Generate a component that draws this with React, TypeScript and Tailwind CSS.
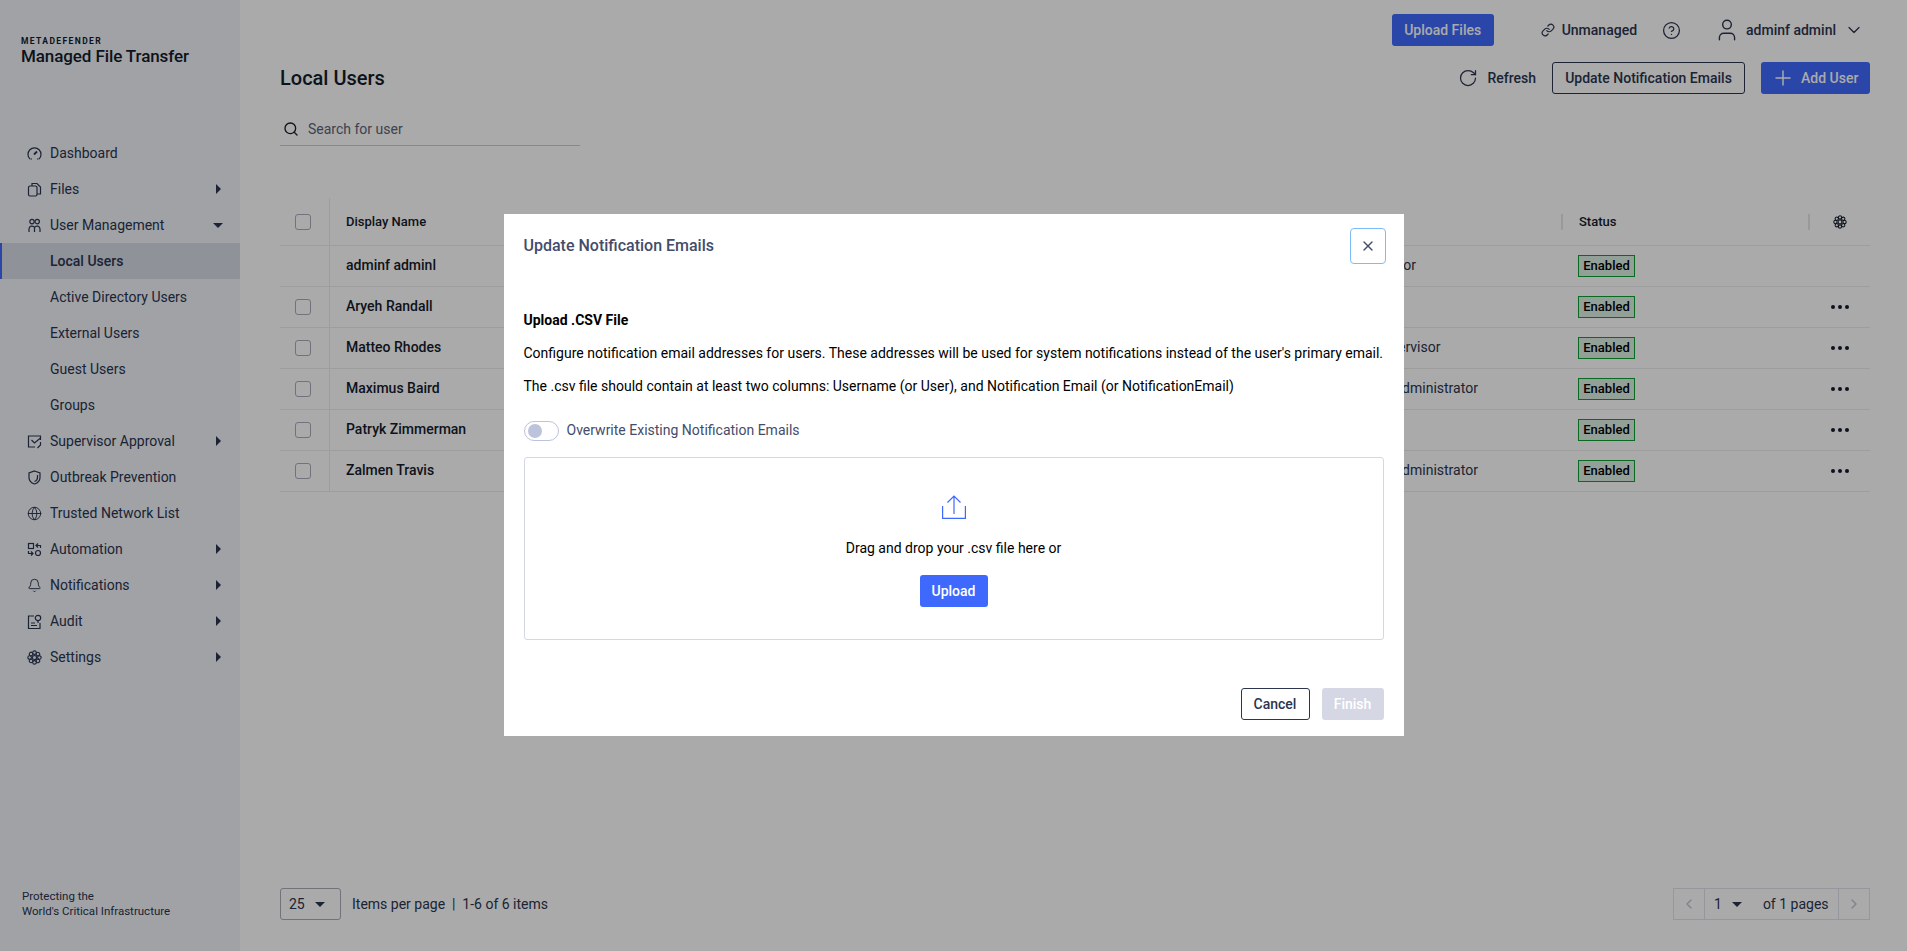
import React from 'react'
import { Bell, ChevronDown, ChevronLeft, ChevronRight, CircleHelp, Globe, Link, Plus, RotateCw, Search, User, X } from 'lucide-react'

const font = { fontFamily: 'Roboto, sans-serif' }

const Caret = ({ down }: { down?: boolean }) =>
  down ? (
    <span className="h-0 w-0 border-x-[5px] border-t-[5px] border-x-transparent border-t-[#2b3550]" />
  ) : (
    <span className="h-0 w-0 border-y-[5px] border-l-[5px] border-y-transparent border-l-[#2b3550]" />
  )

const Ico = ({ children }: { children: React.ReactNode }) => (
  <svg width="15" height="15" viewBox="0 0 15 15" fill="none" stroke="currentColor" strokeWidth="1.2" className="mr-[8px] shrink-0">
    {children}
  </svg>
)

const Cog = ({ size = 15 }: { size?: number }) => (
  <svg width={size} height={size} viewBox="0 0 16 16" fill="none" stroke="currentColor" strokeWidth="1.2">
    {[0, 45, 90, 135, 180, 225, 270, 315].map((a) => (
      <circle key={a} cx="8" cy="2.8" r="1.9" transform={`rotate(${a} 8 8)`} />
    ))}
    <circle cx="8" cy="8" r="2.2" />
  </svg>
)

const DashboardIcon = () => (
  <Ico>
    <path d="M3 13A6.5 6.5 0 1 1 12 13" />
    <path d="M3.5 13h1.5M10 13h1.5" />
    <path d="M7 8.5l3-3" strokeWidth="1.8" />
  </Ico>
)

const FilesIcon = () => (
  <Ico>
    <path d="M5 4V1.5h5l3.5 3.5v7H10" />
    <rect x="1.5" y="4" width="8.5" height="10" rx="1.5" />
  </Ico>
)

const UsersIcon = () => (
  <Ico>
    <circle cx="5" cy="3.6" r="2.2" />
    <circle cx="10.2" cy="3.6" r="2.2" />
    <path d="M2 14v-3a3 3 0 0 1 5.5-1.6V14M7.5 9.4A3 3 0 0 1 13 11v3" />
  </Ico>
)

const ApprovalIcon = () => (
  <Ico>
    <path d="M13.5 6V2H1.5v11H8" />
    <path d="M4.5 6l3 3 6-5" />
    <path d="M13.5 8v3l-3 3" />
  </Ico>
)

const ShieldIcon = () => (
  <Ico>
    <path d="M7.5 1L13 3v4.5C13 11 10.5 13 7.5 14 4.5 13 2 11 2 7.5V3z" />
    <path d="M10.5 5v2.5c0 2-1 3.2-3 4" />
  </Ico>
)

const AutomationIcon = () => (
  <Ico>
    <rect x="1.5" y="1.5" width="5" height="5" />
    <path d="M13.5 6V3.5h-4M11 1.5l-2 2 2 2" />
    <path d="M1.5 9v2.5h4M4 9.5l2 2-2 2" />
    <circle cx="11" cy="11" r="2.5" />
  </Ico>
)

const AuditIcon = () => (
  <Ico>
    <path d="M7 2H1.5v12.5H13V9" />
    <path d="M4 9h4M4 11.5h6" />
    <circle cx="11" cy="4" r="2.7" />
    <path d="M11 6.7V9" />
  </Ico>
)

const nav = [
  { label: 'Dashboard', icon: <DashboardIcon /> },
  { label: 'Files', icon: <FilesIcon />, caret: 'right' },
  { label: 'User Management', icon: <UsersIcon />, caret: 'down' },
  { label: 'Local Users', sub: true, active: true },
  { label: 'Active Directory Users', sub: true },
  { label: 'External Users', sub: true },
  { label: 'Guest Users', sub: true },
  { label: 'Groups', sub: true },
  { label: 'Supervisor Approval', icon: <ApprovalIcon />, caret: 'right' },
  { label: 'Outbreak Prevention', icon: <ShieldIcon /> },
  { label: 'Trusted Network List', icon: <Globe size={15} strokeWidth={1.5} className="mr-[8px] shrink-0" /> },
  { label: 'Automation', icon: <AutomationIcon />, caret: 'right' },
  { label: 'Notifications', icon: <Bell size={15} strokeWidth={1.5} className="mr-[8px] shrink-0" />, caret: 'right' },
  { label: 'Audit', icon: <AuditIcon />, caret: 'right' },
  {
    label: 'Settings',
    icon: (
      <span className="mr-[8px] flex shrink-0">
        <Cog />
      </span>
    ),
    caret: 'right',
  },
]

const users = [
  { name: 'adminf adminl', role: 'Administrator', self: true },
  { name: 'Aryeh Randall', role: 'Operator' },
  { name: 'Matteo Rhodes', role: 'Senior Supervisor' },
  { name: 'Maximus Baird', role: 'Workflow Administrator' },
  { name: 'Patryk Zimmerman', role: 'Operator' },
  { name: 'Zalmen Travis', role: 'Workflow Administrator' },
]

const Sidebar = () => (
  <aside className="flex h-[951px] w-[240px] shrink-0 flex-col bg-[#f0f3f9]">
    <div className="h-[135px] pl-[21px] pt-[36px]">
      <div className="text-[8.5px] font-bold leading-[10px] tracking-[1.4px] text-[#141b2c]">METADEFENDER</div>
      <div className="text-[17px] font-medium leading-[20px] tracking-[-0.1px] text-[#141b2c]">Managed File Transfer</div>
    </div>
    <nav>
      {nav.map((item) => (
        <div
          key={item.label}
          className={
            item.active
              ? 'flex h-[36px] items-center border-l-[2px] border-[#3f69fc] bg-[#d7dce6] pl-[48px] text-[14px] font-medium text-[#2b3550]'
              : 'flex h-[36px] items-center pl-[27px] text-[14px] text-[#2b3550]'
          }
        >
          {item.icon ? item.icon : item.active ? null : <span className="w-[23px]" />}
          <span className="flex-1">{item.label}</span>
          {item.caret && (
            <span className="mr-[17px] flex w-[10px] justify-center">
              <Caret down={item.caret === 'down'} />
            </span>
          )}
        </div>
      ))}
    </nav>
    <div className="mt-auto pb-[32px] pl-[22px] text-[11.5px] leading-[15px] text-[#2b3550]">
      <div>Protecting the</div>
      <div>World's Critical Infrastructure</div>
    </div>
  </aside>
)

const Dots = () => (
  <span className="flex gap-[3px]">
    <span className="h-[4px] w-[4px] rounded-full bg-[#141b2c]" />
    <span className="h-[4px] w-[4px] rounded-full bg-[#141b2c]" />
    <span className="h-[4px] w-[4px] rounded-full bg-[#141b2c]" />
  </span>
)

const UsersTable = () => (
  <div className="text-[14px] font-medium text-[#141b2c]">
    <div className="flex h-[48px] items-center border-b border-[#ececec] text-[13px]">
      <div className="flex h-full w-[50px] items-center justify-center border-r border-[#ececec] pr-[3px]">
        <span className="h-[16px] w-[16px] rounded-[3px] border border-[#a9adbb] bg-white" />
      </div>
      <div className="w-[1231px] pl-[16px]">Display Name</div>
      <div className="h-[16px] w-[2px] bg-[#e6e6e6]" />
      <div className="w-[245px] pl-[16px]">Status</div>
      <div className="h-[16px] w-[2px] bg-[#e6e6e6]" />
      <div className="flex flex-1 justify-center">
        <Cog size={14} />
      </div>
    </div>
    {users.map((user) => (
      <div key={user.name} className="flex h-[41px] items-center border-b border-[#ececec]">
        <div className="flex h-full w-[50px] items-center justify-center border-r border-[#ececec] pr-[3px]">
          {!user.self && <span className="h-[16px] w-[16px] rounded-[3px] border border-[#a9adbb] bg-white" />}
        </div>
        <div className="w-[1001px] pb-[1px] pl-[16px]">{user.name}</div>
        <div className="w-[247px] pb-[1px] font-normal text-[#2b3550]">{user.role}</div>
        <div className="w-[232px]">
          <span className="inline-flex h-[22px] w-[57px] items-center justify-center border border-[#0f9f33] bg-[#dcf0e4] text-[13px] text-black">
            Enabled
          </span>
        </div>
        <div className="flex flex-1 justify-center">{!user.self && <Dots />}</div>
      </div>
    ))}
  </div>
)

const Main = () => (
  <main className="flex h-[951px] flex-1 flex-col bg-white pl-[40px] pr-[37px]">
    <div className="flex h-[60px] items-center justify-end text-[14px] text-[#2b3550]">
      <button className="h-[32px] w-[102px] rounded-[3px] bg-[#3f69fc] text-[14px] font-medium text-white">
        Upload Files
      </button>
      <Link size={14} className="ml-[47px] mr-[7px]" />
      <span className="font-medium">Unmanaged</span>
      <CircleHelp size={19} strokeWidth={1.6} className="ml-[25px]" />
      <User size={26} strokeWidth={1.3} className="ml-[33px] mr-[6px]" />
      <span className="font-medium">adminf adminl</span>
      <ChevronDown size={20} strokeWidth={1.5} className="ml-[8px] mr-[6px]" />
    </div>
    <div className="mt-[2px] flex h-[32px] items-center">
      <h1 className="text-[20px] font-medium text-[#141b2c]">Local Users</h1>
      <div className="ml-auto flex items-center text-[14px] font-medium text-[#2b3550]">
        <RotateCw size={20} strokeWidth={1.5} className="mr-[9px]" />
        <span className="mr-[16px]">Refresh</span>
        <button className="mr-[16px] h-[32px] w-[193px] rounded-[3px] border border-[#2b3550]">
          Update Notification Emails
        </button>
        <button className="flex h-[32px] w-[109px] items-center rounded-[3px] bg-[#3f69fc] pl-[10px] text-white">
          <Plus size={24} strokeWidth={1.5} className="mr-[6px]" />
          Add User
        </button>
      </div>
    </div>
    <div className="mt-[18px] flex h-[34px] w-[300px] items-center border-b border-[#c9cdd6] pl-[3px] pt-[1px] text-[14px] text-[#5b6478]">
      <Search size={16} className="mr-[9px] text-[#141b2c]" />
      Search for user
    </div>
    <div className="mt-[52px]">
      <UsersTable />
    </div>
    <div className="mb-[31px] mt-auto flex h-[32px] items-center text-[14px] text-[#2b3550]">
      <div className="flex h-[32px] w-[61px] items-center rounded-[3px] border border-[#a9adbb] pl-[8px]">
        25
        <span className="ml-[10px] flex">
          <Caret down />
        </span>
      </div>
      <span className="ml-[11px]">Items per page&nbsp;&nbsp;|&nbsp;&nbsp;1-6 of 6 items</span>
      <div className="ml-auto flex h-[32px] items-center border border-[#e0e3ef]">
        <span className="flex h-full w-[31px] items-center justify-center border-r border-[#e0e3ef] text-[#c0c4ce]">
          <ChevronLeft size={16} />
        </span>
        <span className="flex h-full w-[133px] items-center pl-[9px]">
          1
          <span className="ml-[10px] mr-[21px] flex">
            <Caret down />
          </span>
          of 1 pages
        </span>
        <span className="flex h-full w-[31px] items-center justify-center border-l border-[#e0e3ef] text-[#c0c4ce]">
          <ChevronRight size={16} />
        </span>
      </div>
    </div>
  </main>
)

const Modal = () => (
  <div className="fixed inset-0 z-10 flex items-center justify-center bg-black/[0.333]">
    <div className="mb-[1px] flex h-[522px] w-[900px] flex-col bg-white px-[20px] text-[14px] text-black">
      <div className="flex h-[62px] shrink-0 items-center justify-between pt-[2px]">
        <h2 className="text-[16px] font-medium text-[#444c6a]">Update Notification Emails</h2>
        <button className="-mr-[2px] flex h-[36px] w-[36px] items-center justify-center rounded-[4px] border border-[#7cbcf8]">
          <X size={16} className="text-[#444c6a]" />
        </button>
      </div>
      <div className="mt-[34px] font-bold leading-[20px]">Upload .CSV File</div>
      <p className="mt-[13px] leading-[20px]">
        Configure notification email addresses for users. These addresses will be used for system notifications instead of the user's primary email.
      </p>
      <p className="mt-[13px] leading-[20px]">
        The .csv file should contain at least two columns: Username (or User), and Notification Email (or NotificationEmail)
      </p>
      <div className="mt-[24px] flex items-center text-[#444c6a]">
        <span className="mr-[8px] flex h-[20px] w-[35px] items-center rounded-full border border-[#bcc3dc] pl-[3px]">
          <span className="h-[14px] w-[14px] rounded-full bg-[#bcc3dc]" />
        </span>
        Overwrite Existing Notification Emails
      </div>
      <div className="mt-[16px] flex h-[183px] flex-col items-center rounded-[3px] border border-[#d5d8e4] pt-[37px]">
        <svg width="24" height="24" viewBox="0 0 24 24" fill="none" stroke="#3f69fc" strokeWidth="1.2">
          <path d="M0.6 11v12.4h22.8V11" />
          <path d="M12 19V1M5.5 7.5L12 1l6.5 6.5" />
        </svg>
        <div className="mt-[19px] leading-[20px]">Drag and drop your .csv file here or</div>
        <button className="mt-[17px] h-[32px] w-[68px] rounded-[3px] bg-[#3f69fc] font-medium text-white">Upload</button>
      </div>
      <div className="mt-[48px] flex justify-end">
        <button className="mr-[12px] h-[32px] w-[69px] rounded-[3px] border border-[#2b3550] font-medium text-[#2b3550]">
          Cancel
        </button>
        <button className="h-[32px] w-[62px] rounded-[3px] bg-[#d5d8e4] font-medium text-white">Finish</button>
      </div>
    </div>
  </div>
)

export default function App() {
  return (
    <div className="flex h-[951px] w-[1907px] overflow-hidden" style={font}>
      <Sidebar />
      <Main />
      <Modal />
    </div>
  )
}
